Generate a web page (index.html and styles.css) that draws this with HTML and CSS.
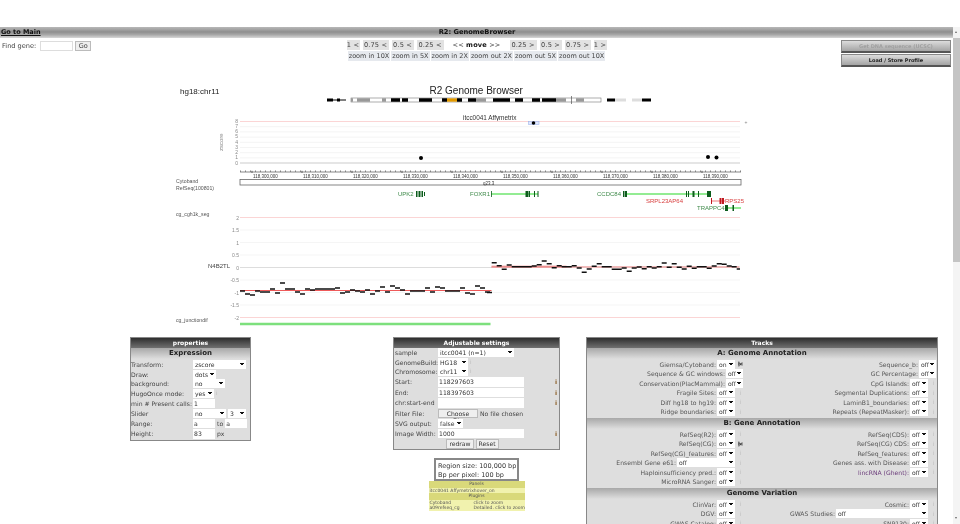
FILE: index.html
```html
<!DOCTYPE html>
<html>
<head>
<meta charset="UTF-8">
<title>R2: GenomeBrowser</title>
<link rel="stylesheet" href="styles.css">
</head>
<body>
<div class="shell">
<div class="page">
	<div class="titlebar">
		<a class="gomain" href="#">Go to Main</a>
		<b class="pagetitle">R2: GenomeBrowser</b>
	</div>

	<div class="toprow">
		<div class="findgene">
			<span>Find gene:</span>
			<input class="geneinput" type="text">
			<button class="gobtn">Go</button>
		</div>
		<div class="nav">
			<div class="navrow">
				<a class="w13">1 &lt;</a><a class="w26">0.75 &lt;</a><a class="w22">0.5 &lt;</a><a class="w27">0.25 &lt;</a>
				<span class="movelabel">&lt;&lt; <b>move</b> &gt;&gt;</span>
				<a class="w27">0.25 &gt;</a><a class="w22">0.5 &gt;</a><a class="w26">0.75 &gt;</a><a class="w13">1 &gt;</a>
			</div>
			<div class="navrow zoomrow">
				<a>zoom in 10X</a><a>zoom in 5X</a><a>zoom in 2X</a><a>zoom out 2X</a><a>zoom out 5X</a><a>zoom out 10X</a>
			</div>
		</div>
		<div class="sidebtns">
			<button class="graybtn off">Get DNA sequence (UCSC)</button>
			<button class="graybtn">Load / Store Profile</button>
		</div>
	</div>

	<svg class="plot" width="953" height="262" viewBox="0 70 953 262">
		<text class="t9" x="180" y="93.500">hg18:chr11</text>
		<text class="t12" x="429.500" y="94">R2 Genome Browser</text>

		<!-- ideogram -->
		<path d="M327 100h19" stroke="#000" stroke-width="1"/>
		<path d="M327 100h6M337 100h3" stroke="#000" stroke-width="3"/>
		<rect x="351" y="98" width="250" height="4" fill="#fff" stroke="#777" stroke-width=".6"/>
		<path d="M351 100h2M357 100h13M382 100h4" stroke="#999" stroke-width="3.400"/>
		<path d="M391 100h9M402 100h6M419 100h13M442 100h5M457 100h5M468 100h8M493 100h17M515 100h8M532 100h8M542 100h14" stroke="#000" stroke-width="3.400"/>
		<path d="M476 100h10M556 100h10M576 100h8" stroke="#999" stroke-width="3.400"/>
		<path d="M447 100h10" stroke="#e39a00" stroke-width="3.400"/>
		<path d="M571.500 96v8" stroke="#555" stroke-width=".7"/>
		<path d="M607 100h8M642 100h9" stroke="#000" stroke-width="3"/>
		<path d="M615 100h11M632 100h10" stroke="#ddd" stroke-width="3"/>

		<text class="t6b" x="463" y="120">itcc0041  Affymetrix</text>

		<!-- zscore track -->
		<path d="M240 121.500h500" stroke="#fbd5d5" stroke-width="1"/>
		<path d="M240 126.700h500M240 131.900h500M240 137.100h500M240 142.300h500M240 147.500h500M240 152.700h500M240 157.900h500" stroke="#f4f4f4" stroke-width="1"/>
		<path d="M240 163h500" stroke="#ddd" stroke-width="1.500"/>
		<g class="tick5" text-anchor="end">
			<text x="238" y="123">8</text><text x="238" y="128">7</text><text x="238" y="133">6</text><text x="238" y="138">5</text>
			<text x="238" y="143.500">4</text><text x="238" y="149">3</text><text x="238" y="154">2</text><text x="238" y="159">1</text><text x="238" y="164.500">0</text>
		</g>
		<text class="zlabel" transform="translate(222.500 151) rotate(-90)">zscore</text>
		<rect x="528.500" y="121.500" width="10.500" height="3" fill="#dfe8ff" stroke="#9db4ea" stroke-width=".6"/>
		<circle cx="533.500" cy="123" r="1.800" fill="#000"/>
		<circle cx="421" cy="158" r="2" fill="#000"/>
		<circle cx="708" cy="157" r="2" fill="#000"/>
		<circle cx="716.500" cy="157.500" r="2" fill="#000"/>
		<text class="tick5" x="744.500" y="124">+</text>

		<!-- ruler -->
		<path d="M240 172h501" stroke="#555" stroke-width=".7"/>
		<path d="M240 171.200h501" stroke="#444" stroke-width="1.300" stroke-dasharray=".7 4.300"/>
		<path d="M252 170.800V173M302 170.800V173M352 170.800V173M402 170.800V173M452 170.800V173M502 170.800V173M552 170.800V173M602 170.800V173M652 170.800V173M702 170.800V173" stroke="#333" stroke-width=".7"/>
		<g class="tick45">
			<text x="253" y="178">118,300,000</text><text x="303" y="178">118,310,000</text><text x="353" y="178">118,320,000</text><text x="403" y="178">118,330,000</text><text x="453" y="178">118,340,000</text>
			<text x="503" y="178">118,350,000</text><text x="553" y="178">118,360,000</text><text x="603" y="178">118,370,000</text><text x="653" y="178">118,380,000</text><text x="703" y="178">118,390,000</text>
		</g>

		<!-- cytoband and genes -->
		<rect x="240" y="179.500" width="501" height="5.500" fill="#fff" stroke="#666" stroke-width=".8"/>
		<text class="tick45" x="483" y="184.500">q23.3</text>
		<text class="lbl" x="176" y="182.500">Cytoband</text>
		<text class="lbl" x="176" y="190">RefSeq(100801)</text>

		<g class="gene">
			<text x="398" y="196">UPK2</text>
			<text x="470" y="196">FOXR1</text>
			<text x="597" y="196">CCDC84</text>
			<text x="697" y="210">TRAPPC4</text>
		</g>
		<path d="M491 194h47M627 194h83M725 208h16" stroke="#93ec93" stroke-width="2"/>
		<path d="M416 191v6h1.500v-6zM418.500 191v6h2v-6zM421.500 191v6h1.500v-6zM424 192v4h1v-4zM491 191v6h.8v-6zM525.500 191v6h2.500v-6zM528.500 191v6h1.500v-6zM534 191v6h1v-6zM537.500 191v6h1v-6zM623 191v6h1.500v-6zM625 191v6h2v-6zM686 191v6h1v-6zM688 191v6h1v-6zM692.500 191v6h2v-6zM698 191v6h1v-6zM707 191v6h4v-6zM725 205v6h3v-6zM732.500 205v6h1.500v-6z" fill="#0c5c1c"/>
		<g class="genered">
			<text x="646" y="203">SRPL23AP64</text>
			<text x="725" y="203">RPS25</text>
		</g>
		<path d="M711 201h14" stroke="#f5a5a5" stroke-width="1.500"/>
		<path d="M711 198v6h1v-6zM719.500 198v6h2v-6zM722 198v6h2v-6z" fill="#c01820"/>

		<!-- copy number track -->
		<text class="lbl" x="176" y="216">cg_cgh1k_seg</text>
		<path d="M240 217.500h500M240 317.500h500" stroke="#fbd5d5" stroke-width="1"/>
		<path d="M240 230h500M240 242.500h500M240 255h500M240 280h500M240 292.500h500M240 305h500" stroke="#f5f5f5" stroke-width="1"/>
		<path d="M240 267.500h252" stroke="#ddd" stroke-width="1"/>
		<g class="tick5" text-anchor="end">
			<text x="239" y="219.500">2</text><text x="239" y="232">1.5</text><text x="239" y="244.500">1</text><text x="239" y="257">0.5</text><text x="239" y="269.500">0</text>
			<text x="239" y="282">-0.5</text><text x="239" y="294.500">-1</text><text x="239" y="307">-1.5</text><text x="239" y="319.500">-2</text>
		</g>
		<text class="t6" x="208" y="268">N4B2TL</text>
		<path d="M240 290.500h251.500" stroke="#ee5a5a" stroke-width="1"/>
		<path d="M491.500 266.500h75" stroke="#f8b8b8" stroke-width="2"/>
		<path d="M491.500 267h248" stroke="#d85050" stroke-width=".8"/>
		<path stroke="#111" stroke-width="1.400" fill="none" d="M240 291h5M245 294h5M250 295h5M255 291h5M260 292h5M265 292h5M270 289h5M275 293h5M280 283h5M285 289h5M290 289h5M295 292h5M300 294h5M305 289h5M310 290h5M315 289h5M320 289h5M325 289h5M330 289h5M335 288h5M340 293h5M345 292h5M350 290h5M355 291h5M360 292h5M365 290h5M370 294h5M375 291h5M380 287h5M385 292h5M390 286h5M395 288h5M400 290h5M405 294h5M410 291h5M415 291h5M420 291h5M425 288h5M430 292h5M435 287h5M440 288h5M445 291h5M450 291h5M455 291h5M460 288h5M465 293h5M470 294h5M475 286h5M480 288h5M485 292h5M487 292.500h5
			M491.700 262.700h5M496.700 265.700h5M501.700 269.300h5M506.700 265h5M511.700 266.700h20M531.700 266h5M536.700 264.700h5M541.700 261h5M546.700 263.700h5M551.700 267.700h5M556.700 265.700h5M561.700 266.700h10M571.700 265.700h5M576.700 268h5M581.700 272.300h5M586.700 269h5M591.700 266.300h5M596.700 263.700h5M601.700 266.700h10M611.700 269.300h10M621.700 268h5M626.700 271.300h5M631.700 268h5M636.700 267h5M641.700 268.700h5M646.700 266.700h5M651.700 268h5M656.700 266.700h5M661.700 263h5M666.700 267.300h5M671.700 263.700h5M676.700 267.300h5M681.700 269h5M686.700 266.300h5M691.700 268.300h5M696.700 266.700h10M706.700 268.300h5M711.700 266h5M716.700 263.700h5M721.700 264.300h5M726.700 266h5M731.700 266.700h5M736.700 269h3.300"/>
		<text class="lbl" x="176" y="322">cg_junctiondif</text>
		<path d="M240 324h250.500" stroke="#7de07d" stroke-width="2.500"/>
	</svg>

	<div class="panels">
		<div class="panel props">
			<div class="panelhead">properties</div>
			<div class="sechead">Expression</div>
			<div class="formgrid propgrid">
				<label>Transform:</label><span class="field"><select class="w53"><option>zscore</option></select></span>
				<label>Draw:</label><span class="field"><select class="w23"><option>dots</option></select></span>
				<label>background:</label><span class="field"><select class="w32"><option>no</option></select></span>
				<label>HugoOnce mode:</label><span class="field"><select class="w21"><option>yes</option></select><i class="info">i</i></span>
				<label>min # Present calls:</label><span class="field"><input class="w22" value="1"></span>
				<label>Slider</label><span class="field"><select class="w33"><option>no</option></select><select class="w18"><option>3</option></select></span>
				<label>Range:</label><span class="field"><input class="w22" value="a"><span>to</span><input class="w22" value="a"></span>
				<label>Height:</label><span class="field"><input class="w22" value="83"><span>px</span></span>
			</div>
		</div>

		<div class="midcol">
			<div class="panel adjust">
				<div class="panelhead">Adjustable settings</div>
				<div class="formgrid adjgrid">
					<label>sample</label><span class="field"><select class="w76"><option>itcc0041 (n=1)</option></select></span>
					<label>GenomeBuild:</label><span class="field"><select class="w30"><option>HG18</option></select><i class="info">i</i></span>
					<label>Chromosome:</label><span class="field"><select class="w30"><option>chr11</option></select><i class="info">i</i></span>
					<label>Start:</label><span class="field"><input class="w86" value="118297603"><b class="mark">i</b></span>
					<label>End:</label><span class="field"><input class="w86" value="118397603"><b class="mark">i</b></span>
					<label>chr:start-end</label><span class="field"><input class="w86"><b class="mark">i</b></span>
					<label>Filter File:</label><span class="field"><button class="minibtn w40">Choose File</button><span>No file chosen</span></span>
					<label>SVG output:</label><span class="field"><select class="w25"><option>false</option></select></span>
					<label>Image Width:</label><span class="field"><input class="w86" value="1000"><b class="mark">i</b></span>
				</div>
				<div class="adjbtns"><button class="minibtn">redraw</button><button class="minibtn">Reset</button></div>
			</div>
			<div class="regionbox">Region size: 100,000 bp<br>Bp per pixel: 100 bp</div>
			<div class="olive">
				<div class="olivehead">Panels</div>
				<div class="oliverow">itcc0041 Affymetrixhover_on</div>
				<div class="olivehead">Plugins</div>
				<div class="oliverow pair"><span>Cytoband</span><span>click to zoom</span></div>
				<div class="oliverow pair"><span>a09refseq_cg</span><span>Detailed. click to zoom</span></div>
			</div>
		</div>

		<div class="panel tracks">
			<div class="panelhead">Tracks</div>
			<div class="sechead">A: Genome Annotation</div>
			<div class="trackgrid">
				<div class="trk"><label>Giemsa/Cytoband:</label><select class="w19"><option>on</option></select><svg class="wrench" width="6" height="6" viewBox="0 0 6 6"><path d="M1 0v6M0 3h6M1 1l4 4M5 1L2 5" stroke="#333" stroke-width=".9"/></svg></div>
				<div class="trk"><label>Sequence_b:</label><select class="w17"><option>off</option></select></div>
				<div class="trk"><label>Sequence &amp; GC windows:</label><select class="w17"><option>off</option></select></div>
				<div class="trk"><label>GC Percentage:</label><select class="w17"><option>off</option></select></div>
				<div class="trk"><label>Conservation(PlacMammal):</label><select class="w17"><option>off</option></select></div>
				<div class="trk"><label>CpG Islands:</label><select class="w19"><option>off</option></select><i class="info">i</i></div>
				<div class="trk"><label>Fragile Sites:</label><select class="w19"><option>off</option></select><i class="info">i</i></div>
				<div class="trk"><label>Segmental Duplications:</label><select class="w19"><option>off</option></select><i class="info">i</i></div>
				<div class="trk"><label>Diff hg18 to hg19:</label><select class="w19"><option>off</option></select><i class="info">i</i></div>
				<div class="trk"><label>LaminB1_boundaries:</label><select class="w19"><option>off</option></select><i class="info">i</i></div>
				<div class="trk"><label>Ridge boundaries:</label><select class="w19"><option>off</option></select><i class="info">i</i></div>
				<div class="trk"><label>Repeats (RepeatMasker):</label><select class="w19"><option>off</option></select><i class="info">i</i></div>
			</div>
			<div class="sechead">B: Gene Annotation</div>
			<div class="trackgrid">
				<div class="trk"><label>RefSeq(R2):</label><select class="w19"><option>off</option></select><i class="info">i</i></div>
				<div class="trk"><label>RefSeq(CDS):</label><select class="w19"><option>off</option></select><i class="info">i</i></div>
				<div class="trk"><label>RefSeq(CG):</label><select class="w19"><option>on</option></select><svg class="wrench" width="6" height="6" viewBox="0 0 6 6"><path d="M1 0v6M0 3h6M1 1l4 4M5 1L2 5" stroke="#333" stroke-width=".9"/></svg></div>
				<div class="trk"><label>RefSeq(CG) CDS:</label><select class="w19"><option>off</option></select><i class="info">i</i></div>
				<div class="trk"><label>RefSeq(CG)_features:</label><select class="w19"><option>off</option></select><i class="info">i</i></div>
				<div class="trk"><label>RefSeq_features:</label><select class="w19"><option>off</option></select><i class="info">i</i></div>
				<div class="trk"><label>Ensembl Gene e61:</label><select class="w58"><option>off</option></select><i class="info">i</i></div>
				<div class="trk"><label>Genes ass. with Disease:</label><select class="w19"><option>off</option></select><i class="info">i</i></div>
				<div class="trk"><label>Haploinsufficiency pred.:</label><select class="w19"><option>off</option></select><i class="info">i</i></div>
				<div class="trk"><label class="purple">lincRNA (Ghent):</label><select class="w19"><option>off</option></select><i class="info">i</i></div>
				<div class="trk"><label>MicroRNA Sanger:</label><select class="w19"><option>off</option></select><i class="info">i</i></div>
				<div class="trk"></div>
			</div>
			<div class="sechead">Genome Variation</div>
			<div class="trackgrid">
				<div class="trk"><label>ClinVar:</label><select class="w19"><option>off</option></select><i class="info">i</i></div>
				<div class="trk"><label>Cosmic:</label><select class="w19"><option>off</option></select><i class="info">i</i></div>
				<div class="trk"><label>DGV:</label><select class="w19"><option>off</option></select><i class="info">i</i></div>
				<div class="trk"><label>GWAS Studies:</label><select class="w92"><option>off</option></select><i class="info">i</i></div>
				<div class="trk"><label>GWAS Catalog:</label><select class="w19"><option>off</option></select><i class="info">i</i></div>
				<div class="trk"><label>SNP130:</label><select class="w19"><option>off</option></select><i class="info">i</i></div>
			</div>
		</div>
	</div>
</div>
<div class="scrollbar">
	<span class="arrow up"></span>
	<span class="thumb"></span>
	<span class="arrow down"></span>
</div>
</div>
</body>
</html>
```

FILE: styles.css
```css
* {
	margin: 0;
	padding: 0;
	box-sizing: border-box;
}

html, body {
	height: 524px;
	overflow: hidden;
	background: #fff;
}

body {
	padding-top: 27px;
	font-family: "DejaVu Sans", Verdana, sans-serif;
	font-size: 6.100px;
	color: #444;
	filter: blur(.35px);
}

.shell {
	display: flex;
	height: 497px;
}

.page {
	width: 953px;
	overflow: hidden;
}

/* title bar */
.titlebar {
	display: grid;
	grid-template-columns: 1fr auto 1fr;
	height: 11px;
	line-height: 11px;
	padding-left: 1px;
	background: linear-gradient(#b8b8b8, #8f8f8f 45%, #a8a8a8 70%, #d8d8d8);
	color: #111;
	font-size: 6.700px;
	font-weight: bold;
}

.gomain {
	color: #111;
	font-size: 6.500px;
	text-decoration: underline;
}

/* top controls */
.toprow {
	display: grid;
	grid-template-columns: 1fr auto 1fr;
	height: 32px;
}

.findgene {
	display: flex;
	align-items: center;
	align-self: start;
	gap: 2px;
	height: 11px;
	margin: 2.500px 0 0 2px;
	font-size: 6.600px;
}

.geneinput {
	width: 33px;
	height: 10px;
	margin-left: 2px;
	border: 1px solid #ddd;
}

.gobtn {
	width: 16px;
	height: 10px;
	border: 1px solid #bbb;
	background: #eee;
	font: 6.500px "DejaVu Sans", sans-serif;
	color: #444;
}

.navrow {
	display: flex;
	justify-content: center;
	gap: 3px;
	margin-top: 2px;
	height: 10px;
	line-height: 10px;
	font-size: 6.600px;
	letter-spacing: .15px;
}

.navrow a {
	background: #e2e2e2;
	text-align: center;
	color: #444;
}

.zoomrow {
	gap: 1px;
	margin-top: 1px;
	font-size: 6.500px;
	letter-spacing: 0;
}

.zoomrow a {
	padding: 0 1px;
	background: #e6e9ee;
}

.movelabel {
	margin: 0 6px;
}

.movelabel b {
	color: #111;
}

.w13 { width: 13px; }
.w22 { width: 22px; }
.w26 { width: 26px; }
.w27 { width: 27px; }

.sidebtns {
	display: flex;
	flex-direction: column;
	align-items: flex-end;
	gap: 1px;
	padding: 2px 2px 0 0;
}

.graybtn {
	width: 110px;
	height: 13px;
	border: 1px solid #888;
	border-bottom: 2px solid #555;
	background: linear-gradient(#dcdcdc, #a4a4a4);
	font: bold 5px "DejaVu Sans", sans-serif;
	color: #222;
}

.graybtn.off {
	color: #a0a0a0;
}

/* genome plot */
.plot {
	display: block;
	font-family: "Liberation Sans", Arial, sans-serif;
}

.t9 { font-size: 8px; fill: #222; }
.t12 { font-size: 10px; fill: #222; }
.t6 { font-size: 6px; fill: #444; }
.t6b { font-size: 6.400px; fill: #333; }
.tick5 { font-size: 5px; fill: #888; }
.zlabel { font-size: 6px; fill: #888; }
.tick45 { font-size: 4.500px; fill: #333; }
.lbl { font-size: 5.200px; fill: #555; }
.gene { font-size: 6px; fill: #3f8a4a; }
.genered { font-size: 6px; fill: #d84040; }

/* panels under the plot */
.panels {
	display: flex;
	align-items: flex-start;
	padding: 5px 0 0 130px;
}

.panel {
	border: 1px solid #888;
	background: #dedede;
}

.panelhead {
	height: 10px;
	line-height: 10px;
	text-align: center;
	color: #fff;
	font-weight: bold;
	font-size: 6px;
	background: linear-gradient(#2e2e2e, #707070);
}

.sechead {
	height: 11px;
	line-height: 11px;
	text-align: center;
	color: #222;
	font-weight: bold;
	font-size: 7px;
	background: linear-gradient(#a8a8a8, #dedede);
}

.props {
	width: 121px;
	height: 104px;
}

.formgrid {
	display: grid;
	align-items: center;
	line-height: 9px;
}

.propgrid {
	grid-template-columns: 62px 1fr;
	padding-top: 1px;
}

.adjgrid {
	grid-template-columns: 43px 1fr;
	padding-left: 1px;
}

.field {
	display: flex;
	align-items: center;
	gap: 2px;
	min-height: 9.500px;
}

select {
	appearance: none;
	-webkit-appearance: none;
	height: 9px;
	border: 0;
	border-radius: 0;
	padding-left: 2px;
	font: 6.100px "DejaVu Sans", sans-serif;
	color: #333;
	background:
		linear-gradient(to top right, transparent 50%, #111 50%) right 4px center / 2px 3px no-repeat,
		linear-gradient(to top left, transparent 50%, #111 50%) right 2px center / 2px 3px no-repeat,
		#fff;
}

input {
	height: 9.500px;
	margin: .5px 0;
	border: 0;
	padding-left: 1px;
	font: 6.100px "DejaVu Sans", sans-serif;
	color: #333;
	background: #fff;
}

.w17 { width: 17px; }
.w18 { width: 18px; }
.w19 { width: 18px; }
.w21 { width: 21px; }
.w23 { width: 23px; }
.w25 { width: 25px; }
.w30 { width: 30px; }
.w32 { width: 32px; }
.w33 { width: 33px; }
.w40 { width: 40px; }
.w53 { width: 53px; }
.w58 { width: 58px; }
.w76 { width: 76px; }
.w86 { width: 86px; }
.w92 { width: 92px; }

.info {
	font-style: normal;
	color: #bbb;
	font-size: 5.500px;
}

.mark {
	margin-left: auto;
	padding-right: 2px;
	color: #8a5a20;
}

.midcol {
	display: flex;
	flex-direction: column;
	align-items: center;
	width: 167px;
	margin-left: 142px;
}

.adjust {
	width: 167px;
	height: 113px;
}

.minibtn {
	height: 9.500px;
	margin: .5px 0;
	border: 1px solid #bbb;
	background: #efefef;
	padding: 0 2px;
	font: 6.100px "DejaVu Sans", sans-serif;
	color: #333;
}

.adjbtns {
	display: flex;
	justify-content: center;
	gap: 2px;
	padding-right: 8px;
}

.regionbox {
	width: 85px;
	height: 23px;
	margin-top: 8px;
	padding: 2px 0 0 2px;
	border: 2px solid #888;
	font-size: 6.500px;
	line-height: 8.500px;
	background: #fff;
	color: #333;
	white-space: nowrap;
}

.olive {
	width: 96px;
	background: #f1f2ae;
	font-size: 4.500px;
	line-height: 5.500px;
	color: #555;
	white-space: nowrap;
}

.olivehead {
	background: #d9d97a;
	text-align: center;
	height: 6.500px;
	line-height: 6.500px;
}

.oliverow {
	padding-left: 1px;
}

.pair {
	display: grid;
	grid-template-columns: 44px 1fr;
}

.tracks {
	width: 352px;
	margin-left: 26px;
}

.trackgrid {
	display: grid;
	grid-template-columns: 157px 1fr;
	padding: .5px 0 1.500px;
}

.trk {
	display: flex;
	align-items: center;
	justify-content: flex-end;
	gap: 1px;
	height: 9.500px;
	padding-right: 1px;
}

.trk .info,
.trk .wrench {
	margin-left: 2px;
	width: 5px;
	text-align: center;
}

.trk label {
	color: #555;
}

.purple {
	color: #6a3a7a !important;
}

/* scrollbar */
.scrollbar {
	display: flex;
	flex-direction: column;
	align-items: stretch;
	width: 7px;
	background: #f4f4f4;
}

.thumb {
	height: 224px;
	background: #c4c4c4;
}

.arrow {
	display: block;
	height: 11px;
	position: relative;
}

.arrow::after {
	content: "";
	position: absolute;
	left: 2px;
	top: 4px;
	border-left: 1.500px solid transparent;
	border-right: 1.500px solid transparent;
}

.up::after {
	border-bottom: 2px solid #666;
}

.down {
	margin-top: auto;
}

.down::after {
	border-top: 2px solid #666;
}
```
